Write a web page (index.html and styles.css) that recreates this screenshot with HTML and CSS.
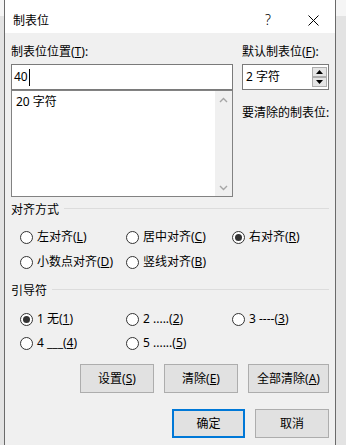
FILE: index.html
```html
<!DOCTYPE html>
<html lang="zh-CN">
<head>
<meta charset="utf-8">
<title>制表位</title>
<link rel="stylesheet" href="styles.css">
</head>
<body>
<div class="window">
  <div class="titlebar">
    <span class="title">制表位</span>
    <span class="help">?</span>
    <span class="close">
      <svg width="11" height="11" viewBox="0 0 11 11"><path d="M0.5 0.5 L10.5 10.5 M10.5 0.5 L0.5 10.5" stroke="#000" stroke-width="1" fill="none"/></svg>
    </span>
  </div>
  <div class="content">
    <div class="top">
      <div class="col">
        <div class="label">制表位位置(<u>T</u>):</div>
        <div class="input"><span>40</span><span class="caret"></span></div>
        <div class="list">
          <div class="list-items"><div class="item">20 字符</div></div>
          <div class="scroll">
            <span class="arrow"><svg width="9" height="6" viewBox="0 0 9 6"><path d="M1 5 L4.5 1.5 L8 5" stroke="#a6a6a6" stroke-width="1.4" fill="none"/></svg></span>
            <span class="arrow"><svg width="9" height="6" viewBox="0 0 9 6"><path d="M1 1 L4.5 4.5 L8 1" stroke="#a6a6a6" stroke-width="1.4" fill="none"/></svg></span>
          </div>
        </div>
      </div>
      <div class="col">
        <div class="label">默认制表位(<u>F</u>):</div>
        <div class="spin">
          <span>2&nbsp;字符</span>
          <div class="spin-btns">
            <div class="spin-btn"><svg width="7" height="4" viewBox="0 0 7 4"><polygon points="0,4 3.5,0 7,4" fill="#000"/></svg></div>
            <div class="spin-btn"><svg width="7" height="4" viewBox="0 0 7 4"><polygon points="0,0 3.5,4 7,0" fill="#000"/></svg></div>
          </div>
        </div>
        <div class="label clear-label">要清除的制表位:</div>
      </div>
    </div>

    <div class="group group-align">
      <div class="group-head"><span>对齐方式</span><span class="rule"></span></div>
      <div class="radios">
        <label class="radio"><span class="circle"></span><span>左对齐(<u>L</u>)</span></label>
        <label class="radio"><span class="circle"></span><span>居中对齐(<u>C</u>)</span></label>
        <label class="radio"><span class="circle checked"></span><span>右对齐(<u>R</u>)</span></label>
        <label class="radio"><span class="circle"></span><span>小数点对齐(<u>D</u>)</span></label>
        <label class="radio"><span class="circle"></span><span>竖线对齐(<u>B</u>)</span></label>
      </div>
    </div>

    <div class="group group-leader">
      <div class="group-head"><span>引导符</span><span class="rule"></span></div>
      <div class="radios radios-leader">
        <label class="radio"><span class="circle checked"></span><span>1 无(<u>1</u>)</span></label>
        <label class="radio"><span class="circle"></span><span>2 .....(<u>2</u>)</span></label>
        <label class="radio"><span class="circle"></span><span>3 ----(<u>3</u>)</span></label>
        <label class="radio"><span class="circle"></span><span>4 ___(<u>4</u>)</span></label>
        <label class="radio"><span class="circle"></span><span>5 ......(<u>5</u>)</span></label>
      </div>
    </div>

    <div class="btn-row row-actions">
      <div class="btn w74">设置(<u>S</u>)</div>
      <div class="btn w74">清除(<u>E</u>)</div>
      <div class="btn w81">全部清除(<u>A</u>)</div>
    </div>
    <div class="btn-row row-confirm">
      <div class="btn primary w73">确定</div>
      <div class="btn w74">取消</div>
    </div>
  </div>
</div>
</body>
</html>
```
FILE: styles.css
```css
html, body {
  margin: 0;
  padding: 0;
}
body {
  width: 346px;
  height: 445px;
  overflow: hidden;
  background: linear-gradient(#f5f5f5 0, #f5f5f5 16px, #e3e3e3 16px);
  font-family: "Noto Sans", "Noto Sans CJK SC", sans-serif;
  font-size: 12px;
  line-height: 16px;
  color: #000;
}
u {
  text-decoration: underline;
  text-underline-offset: 1px;
}
.window {
  margin-left: 4px;
  width: 330px;
  height: 445px;
  overflow: hidden;
  background: #f0f0f0;
  border-left: 1px solid #6a6a6a;
  border-right: 1px solid #6a6a6a;
}
.titlebar {
  height: 33px;
  box-sizing: border-box;
  padding-top: 7px;
  padding-left: 8px;
  background: #fff;
  display: flex;
  align-items: center;
}
.title {
  flex: 1;
  font-family: "Noto Sans CJK SC", sans-serif;
}
.help {
  width: 46px;
  text-align: center;
  font-size: 14px;
  font-weight: 300;
}
.close {
  width: 44px;
  display: flex;
  justify-content: center;
  align-items: center;
}
.content {
  padding: 11px 6px 0 6px;
}
.top {
  display: grid;
  grid-template-columns: 222px 87px;
  column-gap: 9px;
}
.label {
  height: 16px;
  white-space: nowrap;
}
.input {
  margin-top: 4px;
  height: 26px;
  box-sizing: border-box;
  border: 1px solid #7a7a7a;
  background: #fff;
  display: flex;
  align-items: center;
  padding-left: 2px;
}
.caret {
  width: 1px;
  height: 17px;
  background: #000;
  margin-left: 1px;
}
.list {
  height: 107px;
  box-sizing: border-box;
  border: 1px solid #828282;
  background: #fff;
  display: flex;
}
.list-items {
  flex: 1;
  padding: 3px 0 0 4px;
}
.scroll {
  width: 17px;
  background: #f0f0f0;
  display: flex;
  flex-direction: column;
  justify-content: space-between;
}
.arrow {
  height: 17px;
  display: flex;
  align-items: center;
  justify-content: center;
}
.spin {
  margin-top: 4px;
  height: 26px;
  box-sizing: border-box;
  border: 1px solid #7a7a7a;
  background: #fff;
  display: flex;
  align-items: center;
  padding-left: 3px;
}
.spin-btns {
  margin-left: auto;
  margin-right: 1px;
  align-self: flex-start;
  margin-top: 2px;
  display: flex;
  flex-direction: column;
}
.spin-btn {
  width: 15px;
  height: 10px;
  box-sizing: border-box;
  border: 1px solid #adadad;
  background: #e5e5e5;
  display: flex;
  align-items: center;
  justify-content: center;
}
.clear-label {
  margin-top: 15px;
}
.group-align {
  margin-top: 5px;
}
.group-leader {
  margin-top: 11px;
}
.group-head {
  display: flex;
  height: 16px;
}
.rule {
  flex: 1;
  height: 1px;
  margin-top: 6px;
  margin-left: 5px;
  background: #dcdcdc;
}
.radios {
  display: grid;
  grid-template-columns: 106px 106px auto;
  grid-auto-rows: 20px;
  row-gap: 5px;
  padding-left: 9px;
  margin-top: 9px;
}
.radios-leader {
  margin-top: 10px;
  row-gap: 4px;
}
.radio {
  display: flex;
  align-items: center;
  white-space: nowrap;
}
.circle {
  width: 13px;
  height: 13px;
  box-sizing: border-box;
  border: 1px solid #333;
  border-radius: 50%;
  background: #fff;
  margin-right: 4px;
  display: flex;
  align-items: center;
  justify-content: center;
}
.circle.checked::after {
  content: "";
  width: 7px;
  height: 7px;
  border-radius: 50%;
  background: #333;
}
.btn-row {
  display: flex;
  justify-content: flex-end;
  gap: 10px;
}
.row-actions {
  margin-top: 11px;
}
.row-confirm {
  margin-top: 16px;
}
.btn {
  height: 29px;
  box-sizing: border-box;
  border: 1px solid #adadad;
  background: #e1e1e1;
  display: flex;
  align-items: center;
  justify-content: center;
  white-space: nowrap;
}
.btn.primary {
  border: 2px solid #0078d7;
}
.w73 { width: 73px; }
.w74 { width: 74px; }
.w81 { width: 81px; }
```
